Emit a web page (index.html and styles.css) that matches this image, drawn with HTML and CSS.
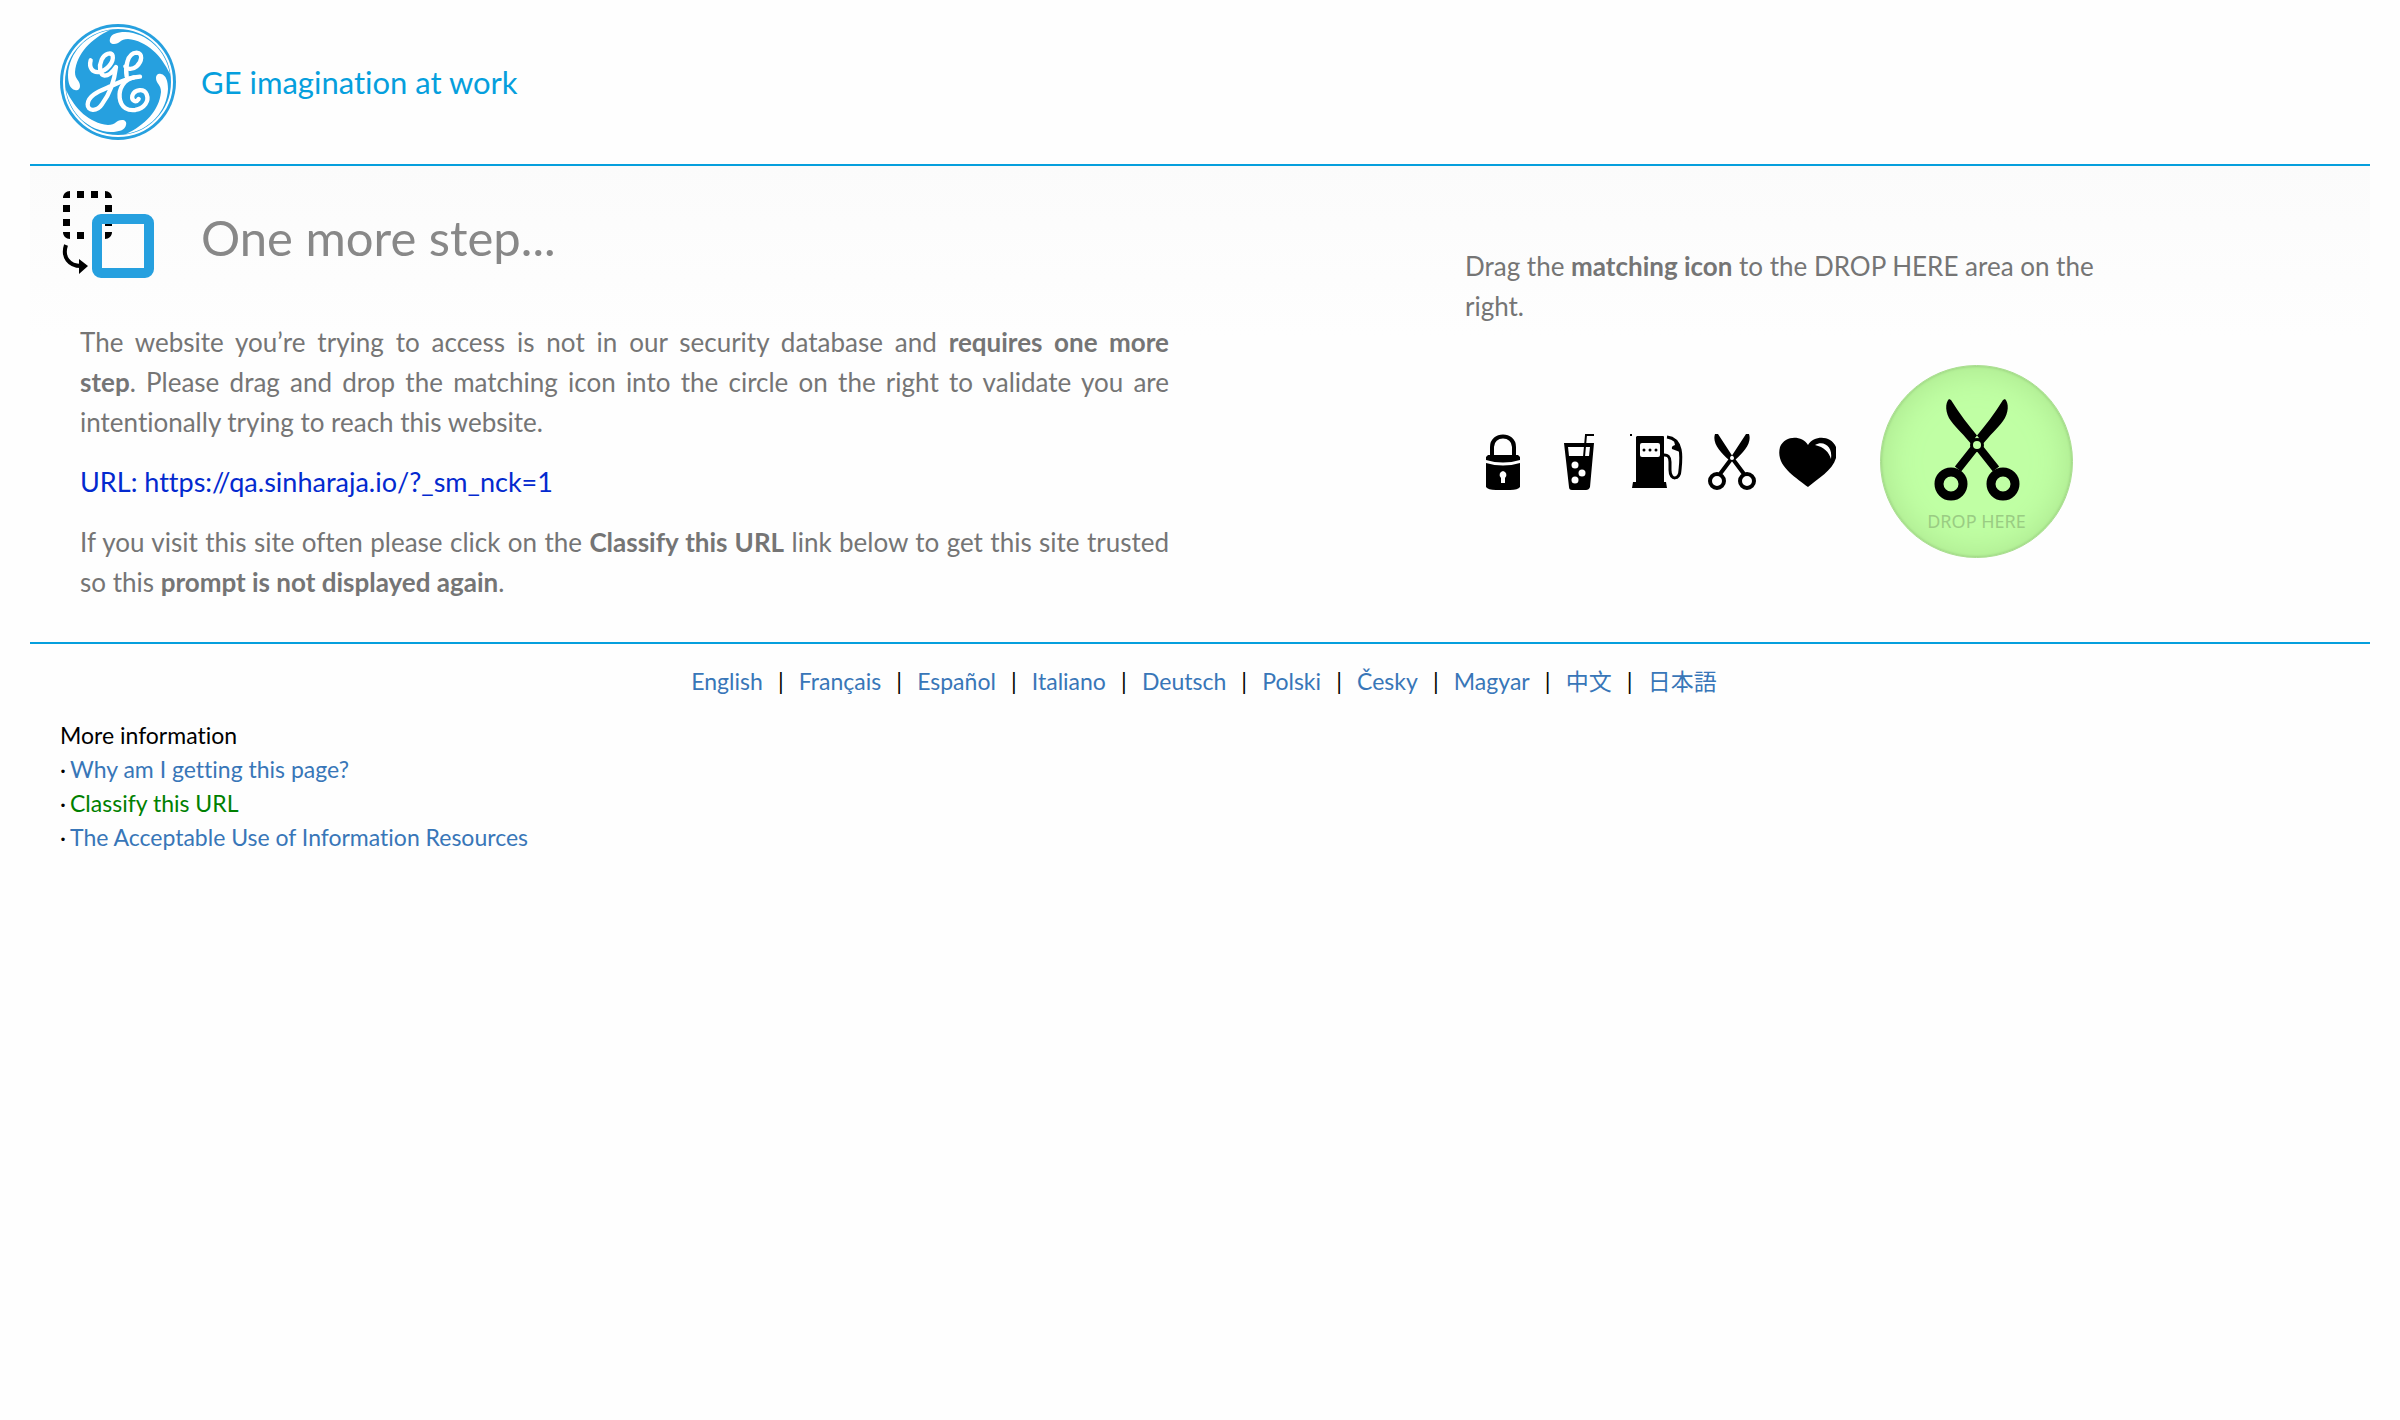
FILE: index.html
```html
<!DOCTYPE html>
<html lang="en">
<head>
<meta charset="utf-8">
<title>One more step...</title>
<link rel="stylesheet" href="styles.css">
</head>
<body>
<header class="brand">
  <svg class="brand-logo" viewBox="0 0 116 116" role="img" aria-label="GE">
    <defs>
      <path id="swash" d="M50 15C51 10 57 8 65 8C87 9 106 26 110 50C101 31 87 17 68 15C60 15 60 20 54 20C51 20 49 18 50 15Z"/>
    </defs>
    <circle cx="58" cy="58" r="58" fill="#26a0df"/>
    <circle cx="58" cy="58" r="54" fill="none" stroke="#fff" stroke-width="2"/>
    <g fill="#fff">
      <use href="#swash"/>
      <use href="#swash" transform="rotate(90 58 58)"/>
      <use href="#swash" transform="rotate(180 58 58)"/>
      <use href="#swash" transform="rotate(270 58 58)"/>
    </g>
    <g transform="translate(-10 -9) scale(.3333)" fill="none" stroke="#fff" stroke-width="13" stroke-linecap="round" stroke-linejoin="round">
      <path d="M122 136C116 158 128 173 146 171C172 168 192 140 188 122C184 110 164 115 155 134C146 154 149 180 164 182C180 182 190 168 198 156C194 190 180 236 156 268C140 292 112 288 113 268C114 240 150 228 182 214C206 204 226 189 270 185"/>
      <path d="M230 184C226 160 230 114 260 113C280 114 276 140 260 154C246 166 230 162 226 154M252 187C222 192 206 222 209 248C213 280 236 288 256 285C284 280 298 258 290 238C282 220 254 222 247 242C244 258 258 264 266 252"/>
    </g>
  </svg>
  <span class="brand-name">GE imagination at work</span>
</header>

<main class="challenge">
  <section class="notice">
    <div class="notice-head">
      <svg class="notice-icon" viewBox="0 0 96 90" aria-hidden="true">
        <path d="M3 8C3 4 6 1 10 1V8ZM17 1H24V8H17ZM31 1H38V8H31ZM45 1C49 1 52 4 52 8H45ZM3 15H10V22H3ZM3 29H10V36H3ZM3 42H10V49C6 49 3 46 3 42ZM17 42H24V49H17ZM45 15H52V22H45ZM45 29H52V36H45ZM45 42H52C52 46 49 49 45 49Z"/>
        <rect x="37" y="29" width="52" height="54" rx="4" fill="none" stroke="#26a0df" stroke-width="10"/>
        <path d="M6 55C2 67 9 76 21 76" fill="none" stroke="#000" stroke-width="4"/>
        <path d="M19 69L28 76L19 84Z"/>
      </svg>
      <h1 class="notice-title">One more step...</h1>
    </div>
    <div class="notice-text">
      <p>The website you’re trying to access is not in our security database and <b>requires one more step</b>.&nbsp;Please drag and drop the matching icon into the circle on the right to validate you are intentionally trying to reach this website.</p>
      <p class="notice-url">URL: https://qa.sinharaja.io/?_sm_nck=1</p>
      <p>If you visit this site often please click on the <b>Classify this URL</b> link below to get this site trusted so this <b>prompt is not displayed again</b>.</p>
    </div>
  </section>

  <section class="puzzle">
    <p>Drag the <b>matching icon</b> to the DROP HERE area on the right.</p>
    <div class="puzzle-row">
      <div class="choices">
        <button class="choice" type="button" draggable="true" aria-label="Lock">
          <svg viewBox="0 0 60 60">
            <path d="M20 25V15C20 1 42 1 42 15V25" fill="none" stroke="#000" stroke-width="4"/>
            <path d="M16 23H46L48 25V28Q31 33 14 28V25Z"/>
            <path d="M14 31Q31 36 48 31V55Q46 58 38 58H24Q16 58 14 55Z"/>
            <path d="M31 39a4 4 0 0 1 2 7v5h-4v-5a4 4 0 0 1 2-7Z" fill="#fff"/>
          </svg>
        </button>
        <button class="choice" type="button" draggable="true" aria-label="Drink">
          <svg viewBox="0 0 60 60">
            <path d="M16 11H46L42 55Q41 58 38 58H24Q21 58 21 55Z"/>
            <path d="M20 15H42L41 24H21Z" fill="#fff"/>
            <path d="M36 25L38 3H46" fill="none" stroke="#000" stroke-width="2"/>
            <g fill="#fff"><circle cx="27" cy="33" r="3.500"/><circle cx="34" cy="41" r="3.500"/><circle cx="27" cy="48" r="3.500"/></g>
          </svg>
        </button>
        <button class="choice" type="button" draggable="true" aria-label="Fuel pump">
          <svg viewBox="0 0 60 60">
            <path d="M6 2h2v2H6ZM13 4H39Q40 4 40 5V50H42L43 56H8L9 50H12V5Z"/>
            <rect x="16" y="11" width="20" height="14" rx="2" fill="#fff"/>
            <circle cx="20" cy="18" r="1.500"/><circle cx="26" cy="18" r="1.500"/><circle cx="32" cy="18" r="1.500"/>
            <path d="M39 23Q46 22 46 30V38C46 49 56 48 56 38C57 28 60 7 43 5" fill="none" stroke="#000" stroke-width="3"/>
            <path d="M50 9L56 13V20L48 17Q47 14 51 13Z"/>
          </svg>
        </button>
        <button class="choice" type="button" draggable="true" aria-label="Scissors">
          <svg viewBox="0 0 60 60">
            <path d="M15 2H18L33 25L29 28C20 20 12 11 15 2ZM49 2H46L31 25L35 28C44 20 52 11 49 2ZM60 22h2v2h-2Z"/>
            <path d="M32 26L20 42M32 26L44 42" stroke="#000" stroke-width="4"/>
            <circle cx="32" cy="26" r="2" fill="#fff"/>
            <g fill="none" stroke="#000" stroke-width="4"><circle cx="17" cy="49" r="7"/><circle cx="47" cy="49" r="7"/></g>
          </svg>
        </button>
        <button class="choice" type="button" draggable="true" aria-label="Heart">
          <svg viewBox="-2 0 60 60">
            <path d="M30 13C24 3 7 3 2 15C-3 34 18 45 30 55C42 45 63 34 58 15C53 3 36 3 30 13Z"/>
            <path d="M37 13C46 8 55 15 53 27C51 20 46 15 37 13Z" fill="#fff"/>
          </svg>
        </button>
      </div>
      <div class="drop-zone">
        <svg class="drop-icon" viewBox="54 33 86 102" aria-hidden="true">
          <path d="M69 33C65 37 65 47 71 55C77 63 84 69 92 79L99 72C89 60 79 47 71 34ZM125 33C129 37 129 47 123 55C117 63 110 69 102 79L95 72C105 60 115 47 123 34Z"/>
          <path d="M97 79L78 103M97 79L116 103" stroke="#000" stroke-width="8"/>
          <circle cx="97" cy="79" r="7"/>
          <circle cx="97" cy="79" r="4" fill="#c0ffa4"/>
          <g fill="none" stroke="#000" stroke-width="9"><circle cx="71" cy="118" r="12"/><circle cx="123" cy="118" r="12"/></g>
        </svg>
        <span class="drop-label">DROP HERE</span>
      </div>
    </div>
  </section>
</main>

<footer>
  <ul class="languages">
    <li><a href="#en">English</a></li>
    <li><a href="#fr">Français</a></li>
    <li><a href="#es">Español</a></li>
    <li><a href="#it">Italiano</a></li>
    <li><a href="#de">Deutsch</a></li>
    <li><a href="#pl">Polski</a></li>
    <li><a href="#cs">Česky</a></li>
    <li><a href="#hu">Magyar</a></li>
    <li><a href="#zh" lang="zh">中文</a></li>
    <li><a href="#ja" lang="ja">日本語</a></li>
  </ul>
  <div class="more">
    <div>More information</div>
    <ul class="more-links">
      <li><a href="#why">Why am I getting this page?</a></li>
      <li><a class="classify" href="#classify">Classify this URL</a></li>
      <li><a href="#policy">The Acceptable Use of Information Resources</a></li>
    </ul>
  </div>
</footer>
</body>
</html>
```
FILE: styles.css
```css
* {
  box-sizing: border-box;
}

body {
  margin: 0;
  padding: 0 30px;
  background: #fefefe;
  color: #000;
  font-family: Lato, "Noto Sans CJK JP", sans-serif;
  font-size: 23px;
  font-variant-ligatures: none;
  line-height: 34px;
}

p, h1, ul {
  margin: 0;
  padding: 0;
}

ul {
  list-style: none;
}

svg {
  display: block;
}

a {
  color: #3876b8;
  text-decoration: none;
}

.brand {
  display: flex;
  align-items: center;
  gap: 25px;
  padding: 24px 30px;
}

.brand-logo {
  width: 116px;
  height: 116px;
}

.brand-name {
  color: #059fdd;
  font-size: 31px;
}

.challenge {
  display: grid;
  grid-template-columns: 1fr 1fr;
  border-top: 2px solid #059fdd;
  border-bottom: 2px solid #059fdd;
  background: linear-gradient(#fbfbfb, #fefefe 170px);
  color: #757575;
  font-size: 26px;
  line-height: 40px;
}

.notice {
  padding: 24px 31px 40px 30px;
}

.notice-head {
  display: flex;
  align-items: center;
  gap: 45px;
}

.notice-icon {
  width: 96px;
  height: 90px;
}

.notice-title {
  padding-top: 4px;
  color: #888;
  font-size: 49px;
  font-weight: 400;
  line-height: 60px;
}

.notice-text {
  display: grid;
  gap: 20px;
  padding: 42px 0 0 20px;
  text-align: justify;
}

.notice-url {
  color: #0329cf;
  font-size: 27px;
}

.puzzle {
  width: 100%;
  max-width: 640px;
  margin: 0 auto;
  padding-top: 80px;
}

.puzzle-row {
  display: flex;
  align-items: center;
  gap: 44px;
  padding: 39px 0 0 7px;
}

.choices {
  display: flex;
  gap: 16px;
}

.choice {
  width: 60px;
  height: 60px;
  padding: 0;
  border: 0;
  background: none;
  cursor: grab;
}

.drop-zone {
  display: flex;
  flex-direction: column;
  align-items: center;
  width: 193px;
  height: 193px;
  padding-top: 33px;
  border: 1px solid #a9dc90;
  border-radius: 50%;
  background: #c0ffa4;
  box-shadow: inset 0 0 3px #8cbf74, inset 0 0 36px #a9e38c;
}

.drop-icon {
  width: 86px;
  height: 102px;
}

.drop-label {
  color: #9acc83;
  font-family: "Noto Sans", sans-serif;
  font-size: 18px;
}

.languages {
  display: flex;
  justify-content: center;
  padding: 20px 0 20px 8px;
}

.languages li + li::before {
  content: "|";
  display: inline-block;
  width: 36px;
  text-align: center;
}

.more {
  padding: 0 30px;
}

.more-links li::before {
  content: "·";
  display: inline-block;
  width: 10px;
}

.classify {
  color: #008000;
}
```
